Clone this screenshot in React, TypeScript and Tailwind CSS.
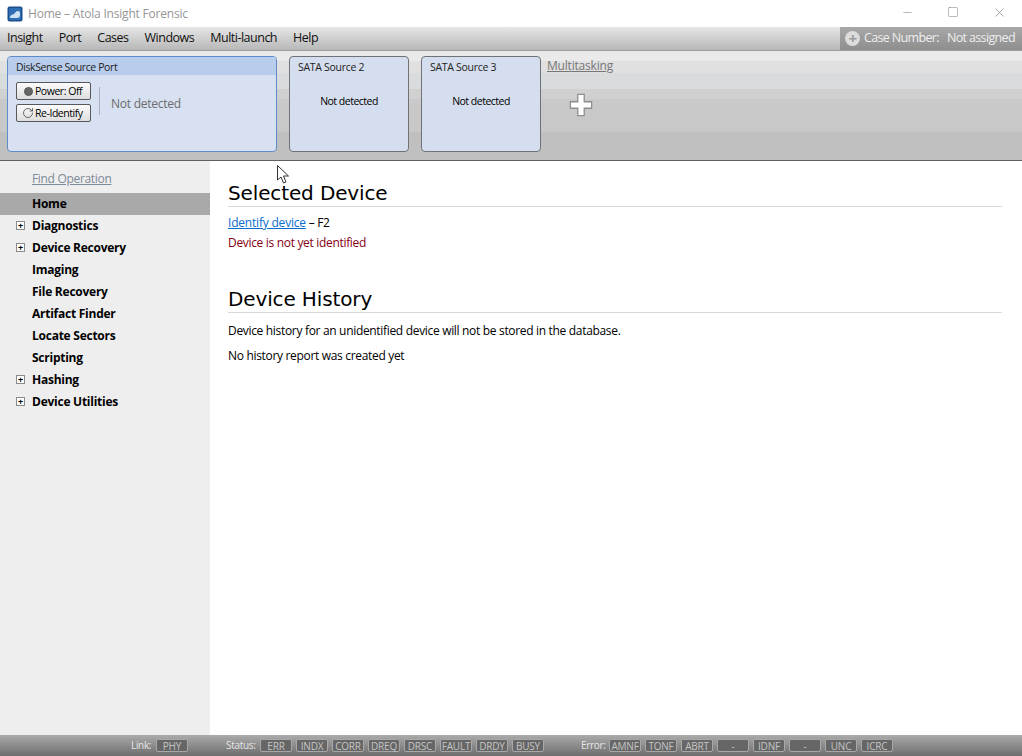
import { Minus, RotateCw, Square, X } from 'lucide-react'

const menuItems = ['Insight', 'Port', 'Cases', 'Windows', 'Multi-launch', 'Help']

const navItems = [
  { label: 'Home', active: true },
  { label: 'Diagnostics', expandable: true },
  { label: 'Device Recovery', expandable: true },
  { label: 'Imaging' },
  { label: 'File Recovery' },
  { label: 'Artifact Finder' },
  { label: 'Locate Sectors' },
  { label: 'Scripting' },
  { label: 'Hashing', expandable: true },
  { label: 'Device Utilities', expandable: true },
]

const statusFlags = ['ERR', 'INDX', 'CORR', 'DREQ', 'DRSC', 'FAULT', 'DRDY', 'BUSY']
const errorFlags = ['AMNF', 'TONF', 'ABRT', '-', 'IDNF', '-', 'UNC', 'ICRC']

function AppIcon() {
  return (
    <svg width="16" height="16" viewBox="0 0 16 16" className="shrink-0">
      <rect x="0.5" y="0.5" width="15" height="15" rx="2" fill="#1d4f8f" />
      <rect x="2" y="2" width="12" height="12" rx="1" fill="#2f6db5" />
      <path d="M3 11c1-3 3-2 4-3s2-3 4-3 2 2 2 4-1 3-3 3H5c-1 0-2 0-2-1z" fill="#cfe3f5" />
    </svg>
  )
}

function Chip({ label }: { label: string }) {
  return (
    <span className="flex h-[13px] w-[32px] items-center justify-center rounded-[2px] border border-[#a8a8a8] bg-[#666666] text-[10px] leading-none tracking-[-0.2px] text-[#c4c4c4]">
      {label}
    </span>
  )
}

function PortCard({ name }: { name: string }) {
  return (
    <div className="flex h-[96px] w-[120px] flex-col rounded-[4px] border border-[#6f7378] bg-[#d5deee]">
      <div className="px-2 pt-[3px] text-[10.5px] leading-[14px] tracking-[-0.3px] text-[#222222]">{name}</div>
      <div className="pt-[20px] text-center text-[10.5px] leading-[14px] tracking-[-0.5px] text-black">Not detected</div>
    </div>
  )
}

function SideButton({ icon, label }: { icon: React.ReactNode; label: string }) {
  return (
    <button
      type="button"
      className="flex h-[18px] w-[75px] items-center gap-[1px] whitespace-nowrap rounded-[2px] border border-[#55585c] bg-gradient-to-b from-[#fbfbfb] to-[#dedede] pl-[5px] text-[10.5px] leading-none tracking-[-0.45px] text-black"
    >
      <span className="flex w-[12px] justify-center">{icon}</span>
      {label}
    </button>
  )
}

export default function App() {
  return (
    <div className="relative flex h-[756px] w-[1022px] flex-col overflow-hidden bg-white font-['Open_Sans','Noto_Sans',sans-serif] text-[12px] tracking-[-0.32px] text-black">
      {/* window title */}
      <div className="flex h-[27px] shrink-0 items-center pl-[7px]">
        <AppIcon />
        <span className="ml-[5px] text-[12px] tracking-[-0.2px] text-[#969696]">Home – Atola Insight Forensic</span>
        <div className="ml-auto flex items-center pb-[3px] text-[#777777]">
          <span className="flex w-[46px] justify-center">
            <Minus size={13} strokeWidth={1} />
          </span>
          <span className="flex w-[46px] justify-center">
            <Square size={12} strokeWidth={1} />
          </span>
          <span className="flex w-[46px] justify-center">
            <X size={15} strokeWidth={1} />
          </span>
        </div>
      </div>

      {/* menu bar */}
      <div className="flex h-[24px] shrink-0 items-center border-b border-[#9c9c9c] bg-gradient-to-b from-[#e6e6e6] to-[#b8b8b8] pl-[7px]">
        <div className="flex gap-[16px] text-[12.5px] tracking-[-0.5px] text-[#111111]">
          {menuItems.map(item => (
            <span key={item}>{item}</span>
          ))}
        </div>
        <div className="ml-auto flex h-full w-[182px] items-center whitespace-nowrap bg-gradient-to-b from-[#a8a8a8] to-[#8e8e8e] pl-[5px] text-[12.5px] tracking-[-0.65px] text-[#eeeeee]">
          <span className="flex h-[15px] w-[15px] items-center justify-center rounded-full bg-[#dcdcdc] text-[15px] font-bold leading-none text-[#9a9a9a]">+</span>
          <span className="ml-[4px]">Case Number:</span>
          <span className="ml-[8px]">Not assigned</span>
        </div>
      </div>

      {/* ports ribbon */}
      <div className="flex h-[110px] shrink-0 gap-[12px] border-b border-[#5f5f5f] bg-[linear-gradient(#eaeaea_0,#eaeaea_10px,#e0e0e0_10px,#e0e0e0_22px,#d9dcdc_22px,#d9dcdc_38px,#d0d0d0_38px,#d0d0d0_48px,#c9c9cc_48px,#c9c9cc_54px,#c8c8c8_54px,#c8c8c8_81px,#c0c0c0_81px)] pl-[7px] pt-[5px]">
        <div className="flex h-[96px] w-[270px] flex-col overflow-hidden rounded-[4px] border border-[#5e8ccb] bg-[#d8e1f1]">
          <div className="h-[18px] bg-[#b8cceb] pl-2 text-[10.5px] leading-[20px] tracking-[-0.4px] text-[#222222]">DiskSense Source Port</div>
          <div className="flex pl-2 pt-[7px]">
            <div className="flex flex-col gap-[4px]">
              <SideButton
                icon={<span className="h-[9px] w-[9px] rounded-full border border-[#555555] bg-[#666666]" />}
                label="Power: Off"
              />
              <SideButton icon={<RotateCw size={12} strokeWidth={1.4} className="text-[#333333]" />} label="Re-Identify" />
            </div>
            <div className="ml-[8px] mt-[5px] h-[28px] w-px bg-[#aab2bf]" />
            <span className="ml-[11px] mt-[14px] text-[12px] leading-[16px] tracking-[-0.25px] text-[#6b6b6b]">Not detected</span>
          </div>
        </div>
        <PortCard name="SATA Source 2" />
        <PortCard name="SATA Source 3" />
        <div className="-ml-[6px] flex flex-col pt-[1px]">
          <a className="text-[12px] leading-[18px] tracking-[-0.2px] text-[#777777] underline">Multitasking</a>
          <svg width="24" height="24" viewBox="0 0 26 26" className="ml-[22px] mt-[18px]">
            <path
              d="M9.5 1.5h7v8h8v7h-8v8h-7v-8h-8v-7h8z"
              fill="#ffffff"
              stroke="#8e8e8e"
              strokeWidth="1.4"
            />
          </svg>
        </div>
      </div>

      <div className="flex min-h-0 flex-1">
        {/* left navigation */}
        <aside className="w-[210px] shrink-0 bg-[#eeeeee] pt-[10px]">
          <a className="ml-[32px] block text-[12px] leading-[16px] text-[#7d8a99] underline">Find Operation</a>
          <div className="mt-[6px]">
            {navItems.map(item => (
              <div
                key={item.label}
                className={`relative flex h-[22px] items-center pl-[32px] text-[12px] font-bold tracking-[-0.25px] ${item.active ? 'bg-[#a9a9a9]' : ''}`}
              >
                {item.expandable && (
                  <span className="absolute left-[16px] top-[6px] flex h-[9px] w-[9px] items-center justify-center border border-[#8a8a8a] bg-white text-[9px] leading-none text-black">
                    +
                  </span>
                )}
                {item.label}
              </div>
            ))}
          </div>
        </aside>

        {/* main content */}
        <main className="flex-1 pl-[18px] pr-[20px] pt-[19px]">
          <h2 className="border-b border-[#d9d9d9] font-['DejaVu_Sans',sans-serif] text-[20px] leading-[26px] tracking-[-0.13px]">Selected Device</h2>
          <p className="mt-[7px] leading-[18px]">
            <a className="tracking-[-0.2px] text-[#0a6ccf] underline">Identify device</a> – F2
          </p>
          <p className="mt-[2px] leading-[18px] text-[#850012]">Device is not yet identified</p>
          <h2 className="mt-[34px] border-b border-[#d9d9d9] font-['DejaVu_Sans',sans-serif] text-[20px] leading-[26px] tracking-[-0.13px]">Device History</h2>
          <p className="mt-[9px] leading-[18px]">Device history for an unidentified device will not be stored in the database.</p>
          <p className="mt-[7px] leading-[18px]">No history report was created yet</p>
        </main>
      </div>

      {/* status bar */}
      <div className="flex h-[21px] shrink-0 items-center bg-gradient-to-b from-[#ababab] to-[#6e6e6e] pl-[131px] text-[10px] text-[#e6e6e6]">
        <span className="w-[25px]">Link:</span>
        <Chip label="PHY" />
        <span className="ml-[38px] w-[34px]">Status:</span>
        <div className="flex gap-[4px]">
          {statusFlags.map(f => (
            <Chip key={f} label={f} />
          ))}
        </div>
        <span className="ml-[37px] w-[28px]">Error:</span>
        <div className="flex gap-[4px]">
          {errorFlags.map((f, i) => (
            <Chip key={i} label={f} />
          ))}
        </div>
      </div>

      {/* mouse pointer caught in the capture */}
      <svg width="13" height="19" viewBox="0 0 13 19" className="absolute left-[277px] top-[165px]">
        <path d="M0.5 0.5v14.5l3.5-3 2.5 6 2.5-1-2.5-6h5z" fill="#ffffff" stroke="#333333" strokeWidth="1" />
      </svg>
    </div>
  )
}
